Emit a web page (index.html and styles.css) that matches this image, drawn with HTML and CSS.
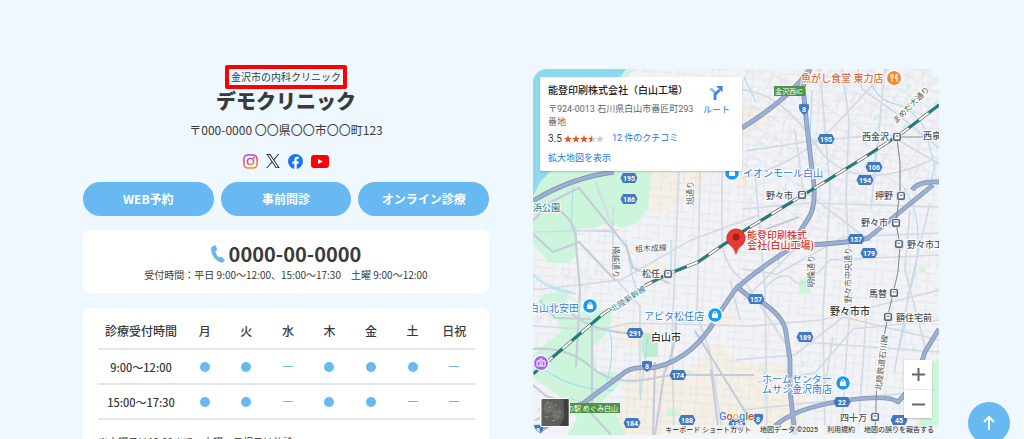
FILE: index.html
```html
<!DOCTYPE html>
<html lang="ja">
<head>
<meta charset="utf-8">
<meta name="viewport" content="width=device-width, initial-scale=1">
<title>デモクリニック</title>
<link rel="stylesheet" href="styles.css">
</head>
<body>
<main class="page">
  <section class="clinic">
    <header class="intro">
      <p class="tagline">金沢市の内科クリニック</p>
      <h1 class="name">デモクリニック</h1>
      <p class="address">〒000-0000 〇〇県〇〇市〇〇町123</p>
      <nav class="social" aria-label="SNS">
        <a href="#" aria-label="Instagram"><svg width="15" height="15" viewBox="0 0 24 24" fill="none" stroke="url(#ig)" stroke-width="2.3"><defs><linearGradient id="ig" x1="0.2" y1="0" x2="0.5" y2="1"><stop offset="0" stop-color="#a04be0"/><stop offset=".5" stop-color="#e8486a"/><stop offset="1" stop-color="#f58a3c"/></linearGradient></defs><rect x="1.5" y="1.5" width="21" height="21" rx="6"/><circle cx="12" cy="12" r="5"/><circle cx="18" cy="6" r=".7"/></svg></a>
        <a href="#" aria-label="X"><svg width="14" height="14" viewBox="0 0 24 24" fill="#222"><path d="M14.2 10.2 22.7 0h-2l-7.4 8.8L7.4 0H.6l9 13.3L.6 24h2l7.9-9.3L16.700 24h6.8zM11.500 13.400l-.9-1.300L3.400 1.500h3.100l5.900 8.600.9 1.300 7.400 11.100h-3.100z"/></svg></a>
        <a href="#" aria-label="Facebook"><svg width="15" height="15" viewBox="0 0 24 24"><circle cx="12" cy="12" r="12" fill="#1877f2"/><path fill="#fff" d="M10.100 24v-8.500H7V12h3.100V9.300c0-3.100 1.800-4.800 4.600-4.800 1.300 0 2.700.2 2.700.2v3h-1.500c-1.500 0-2 .9-2 1.900V12h3.400l-.5 3.500h-2.900V24z"/></svg></a>
        <a href="#" aria-label="YouTube"><svg width="18" height="13" viewBox="0 0 18 13"><rect width="18" height="13" rx="3" fill="#f00"/><path d="M7 4v5l5-2.500z" fill="#fff"/></svg></a>
      </nav>
    </header>
    <nav class="actions" aria-label="ご予約">
      <a class="pill" href="#">WEB予約</a>
      <a class="pill" href="#">事前問診</a>
      <a class="pill" href="#">オンライン診療</a>
    </nav>
    <section class="card phone">
      <a class="tel" href="tel:0000000000"><svg width="14" height="18" viewBox="0 0 14 18" fill="#68b8f1"><path d="M1.200 1.600 3.700.3c.5-.2.900 0 1.100.5l1.300 3.500c.1.400 0 .8-.3 1L4.400 6.400c.6 2.600 1.800 4.600 3.800 6.100l1.800-.7c.4-.1.800 0 1 .3l2.500 2.700c.3.400.3.800 0 1.200-.9 1.200-2 1.700-3.500 1.400C4.500 16 .6 10.500.1 4.400 0 3.200.3 2.200 1.200 1.600z"/></svg>0000-00-0000</a>
      <p class="small">受付時間：平日 9:00〜12:00、15:00〜17:30　土曜 9:00〜12:00</p>
    </section>
    <section class="card hours">
      <table class="schedule">
        <thead><tr><th class="time" scope="col">診療受付時間</th><th scope="col">月</th><th scope="col">火</th><th scope="col">水</th><th scope="col">木</th><th scope="col">金</th><th scope="col">土</th><th scope="col">日祝</th></tr></thead>
        <tbody>
          <tr><th scope="row">9:00〜12:00</th><td><i class="open"></i></td><td><i class="open"></i></td><td><i class="closed"></i></td><td><i class="open"></i></td><td><i class="open"></i></td><td><i class="open"></i></td><td><i class="closed"></i></td></tr>
          <tr><th scope="row">15:00〜17:30</th><td><i class="open"></i></td><td><i class="open"></i></td><td><i class="closed"></i></td><td><i class="open"></i></td><td><i class="open"></i></td><td><i class="closed"></i></td><td><i class="closed"></i></td></tr>
        </tbody>
      </table>
      <p class="small note">※土曜日は12:00まで　水曜、日祝日は休診</p>
    </section>
  </section>

  <section class="map" aria-label="地図">
    <svg class="canvas" viewBox="533 69 406 366" preserveAspectRatio="xMidYMid slice">
      <defs>
        <pattern id="streets" width="34" height="29" patternUnits="userSpaceOnUse" patternTransform="rotate(4)"><path d="M0 5h34M0 19h21M21 13h13M8 0v29M27 5v24M15 5v14M2 19v10M0 26h27" fill="none" stroke="#dfe3ea" stroke-width=".8"/></pattern>
        <pattern id="tilted" width="23" height="27" patternUnits="userSpaceOnUse" patternTransform="rotate(32)"><path d="M0 4h23M0 15h15M6 4v23M17 0v15" fill="none" stroke="#dce2e9" stroke-width=".8"/></pattern>
        <g id="station"><rect x="-4.500" y="-4.500" width="9" height="9" rx="2.500" fill="#52677c" stroke="#fff" stroke-width=".7"/><rect x="-2.500" y="-3" width="5" height="5.500" rx="1" fill="#fff"/><path d="M-1.500-1h3M-2 3.200h4" stroke="#52677c"/></g>
        <g id="shop"><path d="M-4 5 0 10l4-5z" fill="#fff"/><circle r="8" fill="#fff"/><circle r="6.800" fill="#199cf5"/><rect x="-3" y="-1.500" width="6" height="4.500" rx=".5" fill="#fff"/><path d="M-1.500-1v-1a1.500 1.500 0 0 1 3 0v1" fill="none" stroke="#fff"/></g>
        <path id="wide" d="M-6-5H6L8.500 0 6 5H-6L-8.500 0z" fill="#4078c3"/>
        <path id="shield" d="M-5-4.500Q0-6 5-4.500 6 2 0 6-6 2-5-4.500z" fill="#4078c3"/>
      </defs>
      <rect x="533" y="69" width="406" height="366" fill="#f2f3f6"/>
      <g fill="#f5efe4">
        <path d="M626 376 654 362 692 370 716 340 738 362 790 366 806 396 800 420 770 435H610l12-30z"/>
        <path d="M742 107h28v14l-28 18zM733 168h16v16l-14 4zM650 172h60l-12 24-46 20zM612 320l40 6 4 12-10 12-24-4zM640 263h30v10h-26zM715 312h18v14h-18zM845 315h12v12h-12z"/>
      </g>
      <rect x="533" y="69" width="406" height="366" fill="url(#streets)"/>
      <path d="M742 69h197v125L742 260zM533 270h65l-15 45-50 10z" fill="url(#tilted)"/>
      <g fill="#cdf5dc">
        <path d="M622 69h12l-10 12-18 4zM533 178l18-10 101 4-4 36-10 14-16 6-14-5-15 5-16 1v26l-9 8-19 0-18-22z"/>
        <path d="M533 310l10-16 22-2 4 22 44-5-4 22-16 16 4 24 26 2-4 12-20 19 14 4 11 22 1 5h-58l10-16-8-16-36-26v-22l28-24-5-16z"/>
        <path d="M922 365l17-5v68h-20zM873 117l6-4v5l-5 3zM906 84l6 1-4 6zM932 104l7-4v7zM760 143h5v3h-5zM800 280l10-4v17h-11zM919 267h6v5h-6zM801 361h4v4h-4zM763 363l6 14-7-2zM912 347h4v5h-4zM884 391l3-2-1 10zM666 412l8-6 6 10h-14zM685 371h8v5h-8z"/>
        <path d="M643 333 658 335v22h-14l-3-8z" fill="#c0eccf"/>
      </g>
      <path d="M533 69h93l-13 18-36 60-28 26-9 9-7 14z" fill="#8dd9ee"/>
      <path fill="none" stroke="#a5def1" stroke-width="1.100" d="M870 80q7 20 25 24t30 25q5 20 10 38l-6 20M904 188q15 22 14 55t-11 54M533 275q18 17 43 19M573 185l-2 45 45 2M544 370q35 22 70 20M538 410q25-22 55-2M610 330q5 30-4 52M626 240q5 38 11 50M671 240v30M744 77l12 25M875 150v28M648 336l-8 65M545 285l27 7M906 320l-7 30M782 240l-4 24M812 90l-2 50"/>
      <g fill="none" stroke="#d4dae4" stroke-width="1.700">
        <path d="M742 90q40 3 74 55t116 15M742 178q60-15 100-60l46-49M746 151l65-10 77-7 51 30M858 69l4 20 35 25 42 34M842 69l7 50-3 75 5 100-5 65-5 76M820 69l10 120-7 125 2 121M755 173l10 118 2 144M722 172v70q2 25 23 40l40 61M700 172l-3 144 12 33 13 80M679 172l-7 165 2 98M533 290l88-10 70-40 68-25M533 326l66 4 31-7 120 3 71-6 118-30"/>
        <path d="M742 209l67-6 130 4M742 269l35 5 66-37 96-4M765 288q18-20 28-8t37-20l109-5M735 360l60-5 48-38 96 23M758 382l57-9 38-44 86-9M742 410l195-20M805 342l134 10M533 232l85-2M613 206v70l27 30v90M595 181l20 52M740 320l-10-40M930 203l-19 80-17 90M910 210l-5 60 21 80M833 337l-10 60M866 319l-8 115M744 300l50-50M795 130l8 60 68 52M885 69l-14 140"/>
      </g>
      <g fill="none" stroke="#c5cdd9" stroke-width="2.200">
        <path d="M533 221l16-18 30-15 34 42 13 16 7 22 36 15M533 234l20 18 26-10 36 38M544 202q34 14 32 42l4 46-4 77M570 312q18 19 66 22M533 349q34-3 58 18t68 10l15-2h80M653 435l2-73M533 385l13 11 24 7M695 331l56 90M711 369l8 65M727 244l72-27"/>
        <path d="M592 326v80M540 300l15 18 36 1M535 420l46-18 30 33M676 320q0 30-12 54l-9 61"/>
      </g>
      <g fill="none" stroke="#8297bd" stroke-width="4.800" stroke-linejoin="round">
        <path d="M810 69 803 87 807 127 812 170Q818 205 808 219L788 250Q750 275 735 290L722 309Q705 340 685 354T647 368Q630 366 620 376L585 402 535 433M810 69Q790 98 742 128M614 172Q570 178 533 201M933 185 868 238Q860 242 795 246M736 285Q748 298 758 300 784 315 786 333L790 359V390L795 435M775 426Q795 408 842 401T898 402Q915 385 925 352L939 329M912 190Q918 181 939 182"/>
      </g>
      <g fill="none" stroke="#9eb0d0" stroke-width="3">
        <path d="M810 69 803 87 807 127 812 170Q818 205 808 219L788 250Q750 275 735 290L722 309Q705 340 685 354T647 368Q630 366 620 376L585 402 535 433M810 69Q790 98 742 128M614 172Q570 178 533 201M933 185 868 238Q860 242 795 246M736 285Q748 298 758 300 784 315 786 333L790 359V390L795 435M775 426Q795 408 842 401T898 402Q915 385 925 352L939 329M912 190Q918 181 939 182"/>
      </g>
      <path d="M897 138 900 163V190L896 223 900 245 898 272 888 315 877 376 875 435M897 137h42" fill="none" stroke="#858b92" stroke-width="1.100"/>
      <g fill="none">
        <path d="M939 105 902 133 865 157 818 186 742 232 698 262 668 274 648 284 603 314 533 374" stroke="#555" stroke-width="3.200"/>
        <path d="M939 105 902 133 865 157 818 186 742 232 698 262 668 274 648 284 603 314 533 374" stroke="#fff" stroke-width="2"/>
        <path d="M939 105 902 133 865 157 818 186 742 232 698 262 668 274 648 284 603 314 533 374" stroke="#147d80" stroke-width="2.400" stroke-dasharray="13 12"/>
      </g>
      <use href="#wide" x="629" y="178"/><use href="#wide" x="629" y="199"/><use href="#shield" x="804" y="109"/><use href="#wide" x="826" y="139"/><use href="#wide" x="874" y="167"/><use href="#wide" x="865" y="180"/><use href="#wide" x="856" y="239"/><use href="#wide" x="869" y="253"/><use href="#wide" x="756" y="299"/><use href="#wide" x="635" y="333"/><use href="#shield" x="647" y="366"/><use href="#wide" x="678" y="375"/><use href="#wide" x="632" y="423"/><use href="#wide" x="687" y="420"/><use href="#wide" x="737" y="424"/><use href="#wide" x="805" y="337"/><use href="#wide" x="842" y="402"/><use href="#shield" x="758" y="419"/><use href="#wide" x="899" y="420"/><use href="#shield" x="538" y="430"/>
      <g class="route">
        <text x="629" y="181">195</text><text x="629" y="202">186</text><text x="804" y="112">8</text><text x="826" y="142">195</text><text x="874" y="170">106</text><text x="865" y="183">194</text><text x="856" y="242">157</text><text x="869" y="256">179</text><text x="756" y="302">157</text><text x="635" y="336">291</text><text x="647" y="369">8</text><text x="678" y="378">174</text><text x="632" y="426">184</text><text x="687" y="423">188</text><text x="737" y="427">186</text><text x="805" y="340">189</text><text x="842" y="405">22</text><text x="758" y="422">8</text><text x="899" y="423">45</text><text x="538" y="433">8</text>
      </g>
      <use href="#station" x="897" y="137"/><use href="#station" x="802" y="195"/><use href="#station" x="901" y="196"/><use href="#station" x="896" y="223"/><use href="#station" x="899" y="244"/><use href="#station" x="894" y="293"/><use href="#station" x="888" y="317"/><use href="#station" x="875" y="417"/><use href="#station" x="668" y="274"/>
      <g class="place">
        <text x="862" y="140">西金沢</text><text x="923" y="139">西泉</text><text x="766" y="199">野々市</text><text x="875" y="199">押野</text><text x="861" y="226">野々市</text><text x="907" y="248">野々市工</text><text x="869" y="297">馬替</text><text x="896" y="321">額住宅前</text><text x="840" y="421">四十万</text><text x="642" y="277">松任</text>
      </g>
      <g class="place city"><text x="651" y="341">白山市</text><text x="830" y="315">野々市市</text></g>
      <g class="place road">
        <text transform="translate(896 124) rotate(-45)">まめだ大通り</text><text transform="translate(693 205) rotate(-90)">旭通り</text><text transform="translate(613 246) rotate(90)">横越通り</text><text transform="translate(635 252) rotate(-3)">柤木成線</text><text transform="translate(814 287) rotate(-90)">明倫通り</text><text transform="translate(851 303) rotate(-90)">野々市中央通り</text><text transform="translate(881 391) rotate(-83)">北陸鉄道石川線</text>
        <text class="rail" transform="translate(613 312) rotate(-33)">北陸新幹線</text>
      </g>
      <g class="place biz"><text x="743" y="177">イオンモール白山</text><text x="644" y="320">アピタ松任店</text><text x="529" y="312">白山北安田</text><text x="762" y="383">ホームセンター</text><text x="762" y="393">ムサシ金沢南店</text></g>
      <text class="place park" x="533" y="211">浜公園</text>
      <text class="place food" x="801" y="82">魚がし食堂 東力店</text>
      <g class="place dest"><text x="747" y="239">能登印刷株式</text><text x="747" y="249">会社(白山工場)</text></g>
      <use href="#shop" x="732" y="173"/><use href="#shop" x="715" y="315"/><use href="#shop" x="590" y="306"/><use href="#shop" x="843" y="383"/>
      <path d="M889 82 894 88l5-6z" fill="#fff"/><circle cx="894" cy="78" r="8" fill="#fff"/><circle cx="894" cy="78" r="7" fill="#f28a35"/><path d="M891 74v3q0 1 1 1v4M893 74v4M897 82v-8q-2 1-1.500 4.500h1.500" stroke="#fff" fill="none"/>
      <circle cx="541" cy="363" r="8" fill="#fff"/><circle cx="541" cy="363" r="7" fill="#a864ed"/><path d="M537 361h8v5h-8zM538 361l3-2.500 3 2.500M540 362v4m2-4v4" stroke="#fff" fill="none"/>
      <path d="M736 254.500q-1-5-5-8.500a9.300 9.300 0 1 1 10 0q-4 3.500-5 8.500z" fill="#e43b35" stroke="#c62c28" stroke-width=".5"/><circle cx="736" cy="237" r="3.500" fill="#a91f1b"/>
      <g fill="#4b9443"><rect x="774" y="86" width="31" height="10"/><rect x="560" y="403" width="60" height="10"/></g>
      <g class="sign"><text x="775" y="94">金沢西IC</text><text x="567" y="411">の駅 めぐみ白山</text></g>
      <text class="google" x="719" y="420"><tspan fill="#4285f4">G</tspan><tspan fill="#ea4335">o</tspan><tspan fill="#fbbc05">o</tspan><tspan fill="#4285f4">g</tspan><tspan fill="#34a853">l</tspan><tspan fill="#ea4335">e</tspan></text>
    </svg>
    <article class="info">
      <div class="info-text">
        <h2>能登印刷株式会社（白山工場）</h2>
        <p class="info-address">〒924-0013 石川県白山市番匠町293番地</p>
        <p class="rating"><span class="score">3.5</span>
          <svg width="40" height="8" viewBox="0 0 50 10" role="img" aria-label="5段階中3.5"><defs><path id="star" d="M5 0 6.300 3.300 10 3.600 7.200 5.900 8.100 9.500 5 7.600 1.900 9.500 2.800 5.900 0 3.600 3.700 3.300z"/><clipPath id="half"><path d="M30 0h5v10h-5z"/></clipPath></defs><g fill="#e7552b"><use href="#star"/><use href="#star" x="10"/><use href="#star" x="20"/></g><g fill="#c8cbd0"><use href="#star" x="30"/><use href="#star" x="40"/></g><g clip-path="url(#half)" fill="#e7552b"><use href="#star" x="30"/></g></svg>
          <a href="#">12 件のクチコミ</a></p>
        <a class="larger" href="#">拡大地図を表示</a>
      </div>
      <a class="directions" href="#"><svg width="14" height="14" viewBox="0 0 14 14" fill="none"><path d="M1.500 2.500 6.500 7" stroke="#8ab9f5" stroke-width="2.800"/><path d="M6 14V8.500L10.500 4" stroke="#3b82ea" stroke-width="2.800"/><path d="M7 0h6.500v6.500z" fill="#3b82ea"/></svg>ルート</a>
    </article>
    <div class="zoom"><button type="button" aria-label="拡大"><svg width="13" height="13" viewBox="0 0 13 13" stroke="#666" stroke-width="2"><path d="M0 6.500h13M6.500 0v13"/></svg></button><button type="button" aria-label="縮小"><svg width="13" height="13" viewBox="0 0 13 13" stroke="#666" stroke-width="2"><path d="M0 6.500h13"/></svg></button></div>
    <button class="satellite" type="button" aria-label="航空写真"><svg viewBox="0 0 26 26"><path fill="#5d5f5a" d="M0 0h26v26H0z"/><path fill="#3c403e" d="M21 0h5v26h-8l4-9z"/><path fill="#6d6f69" d="M3 3h7l3 6-6 5-5-3zM11 13l7-3 1 8-7 4z"/><path d="M2 14l6-4 5 3 5-5M4 20l8-5 6 3M9 3l4 7-2 8" stroke="#7d7f78" stroke-width=".7" fill="none"/><path d="M3 17h3M7 8h2M13 6h2M10 21h3M17 12h2M5 3h2M6 12h1M15 17h1" stroke="#94958f"/></svg></button>
    <footer class="credits"><a href="#">キーボード ショートカット</a><span>地図データ ©2025</span><a href="#">利用規約</a><a href="#">地図の誤りを報告する</a></footer>
  </section>
</main>
<a class="to-top" href="#" aria-label="ページの先頭へ"><svg width="14" height="16" viewBox="0 0 14 16" fill="none" stroke="#fff" stroke-width="2"><path d="M7 15V2M2 7l5-5 5 5"/></svg></a>
</body>
</html>
```

FILE: styles.css
```css
* { box-sizing: border-box; }
body {
  margin: 0;
  background: #eff7ff;
  color: #3a3a3a;
  font-family: "Noto Sans CJK JP", sans-serif;
  font-size: 12px;
  line-height: 16px;
}
h1, h2, p { margin: 0; }
a { color: inherit; text-decoration: none; }
svg { display: block; }

.page {
  display: grid;
  grid-template-columns: minmax(0, 1fr) minmax(0, 1fr);
  align-items: start;
  gap: 44px;
  height: 100vh;
  overflow: hidden;
  padding: 65px 85px 0 83px;
}
.intro { display: flex; flex-direction: column; align-items: center; }
.tagline {
  padding: 0 2px;
  border: 4px solid #f00;
  border-radius: 2px;
  font-size: 10px;
}
.name { font-size: 20px; line-height: 24px; font-weight: 900; }
.address { margin-top: 9px; }
.social {
  display: flex;
  align-items: center;
  gap: 8px;
  height: 16px;
  margin-top: 15px;
}
.actions {
  display: grid;
  grid-template-columns: repeat(3, 1fr);
  gap: 7px;
  margin-top: 13px;
}
.pill {
  padding: 9px 0;
  border-radius: 17px;
  background: #68b8f1;
  color: #fff;
  font-weight: 700;
  text-align: center;
}
.card { border-radius: 7px; background: #fff; }
.phone { margin-top: 14px; padding: 10px 0; text-align: center; }
.tel {
  display: flex;
  justify-content: center;
  align-items: center;
  gap: 4px;
  font-size: 20px;
  line-height: 27px;
  font-weight: 700;
}
.small { font-size: 10px; }
.hours { margin-top: 15px; padding: 6px 14px 14px 15px; }
.schedule { width: 100%; table-layout: fixed; border-collapse: collapse; }
.schedule th, .schedule td {
  height: 35px;
  padding: 0;
  border-bottom: 2px solid #e6e6e6;
  text-align: center;
  vertical-align: middle;
}
.schedule thead th { font-weight: 500; }
.schedule .time { width: 86px; }
.schedule tbody th { font-size: 11px; font-weight: 500; }
.open, .closed { display: block; width: 10px; margin: 0 auto; background: #68b8f1; }
.open { height: 10px; border-radius: 50%; }
.closed { height: 1px; }
.note { margin-top: 14px; }

.map {
  position: relative;
  height: 366px;
  margin-top: 4px;
  overflow: hidden;
  border-radius: 14px;
  font-family: Roboto, "Noto Sans CJK JP", sans-serif;
}
.canvas { width: 100%; height: 100%; }
.route { fill: #fff; font-size: 7px; font-weight: 700; text-anchor: middle; }
.place {
  fill: #48525e;
  font-size: 9px;
  font-weight: 500;
  stroke: #fff;
  stroke-width: 2px;
  stroke-linejoin: round;
  paint-order: stroke;
}
.city { fill: #333; font-size: 10px; }
.road { fill: #555; font-size: 8px; font-weight: 400; }
.rail { fill: #2b8190; }
.biz { fill: #2b7de0; font-size: 10px; font-weight: 400; }
.park { fill: #2c8792; }
.food { fill: #df6841; font-size: 10px; }
.dest { fill: #e0352f; font-size: 10px; }
.sign { fill: #fff; font-size: 7px; }
.google { font-size: 11px; font-weight: 500; stroke: #fff; stroke-width: 1px; paint-order: stroke; }

.info {
  position: absolute;
  top: 8px;
  left: 7px;
  display: flex;
  justify-content: space-between;
  width: 202px;
  padding: 7px 12px 6px 8px;
  border-radius: 1px;
  background: #fff;
  box-shadow: 0 1px 2px #0003;
  font-size: 9px;
  line-height: 13px;
}
.info-text { width: 148px; }
.info h2 { font-size: 10px; line-height: 14px; font-weight: 500; color: #222; white-space: nowrap; }
.info-address { margin-top: 5px; color: #666; }
.rating { display: flex; align-items: center; gap: 2px; margin-top: 3px; white-space: nowrap; }
.score { font-size: 10px; }
.info a { color: #2577dc; }
.rating a { margin-left: 6px; }
.larger { display: block; margin-top: 7px; }
.directions { display: flex; flex-direction: column; align-items: center; gap: 4px; padding-top: 2px; }

.zoom {
  position: absolute;
  right: 7px;
  bottom: 17px;
  display: grid;
  width: 28px;
  padding: 0 2px;
  background: #fff;
  box-shadow: 0 1px 2px #0003;
}
.zoom button {
  display: grid;
  place-items: center;
  height: 29px;
  padding: 0;
  border: 0;
  background: none;
}
.zoom button + button { border-top: 1px solid #e6e6e6; }
.satellite {
  position: absolute;
  left: 7px;
  bottom: 8px;
  width: 30px;
  height: 29px;
  padding: 0;
  overflow: hidden;
  border: 1px solid #fff;
  border-radius: 2px;
}
.satellite svg { width: 100%; height: 100%; }
.credits {
  position: absolute;
  right: 0;
  bottom: 0;
  display: flex;
  gap: 9px;
  padding: 0 5px 0 2px;
  background: #f5f5f5b3;
  color: #222;
  font-size: 7px;
  line-height: 10px;
  white-space: nowrap;
}
.to-top {
  position: fixed;
  right: 14px;
  bottom: -5px;
  display: grid;
  place-items: center;
  width: 42px;
  height: 42px;
  border-radius: 50%;
  background: #68b8f1;
}
```
